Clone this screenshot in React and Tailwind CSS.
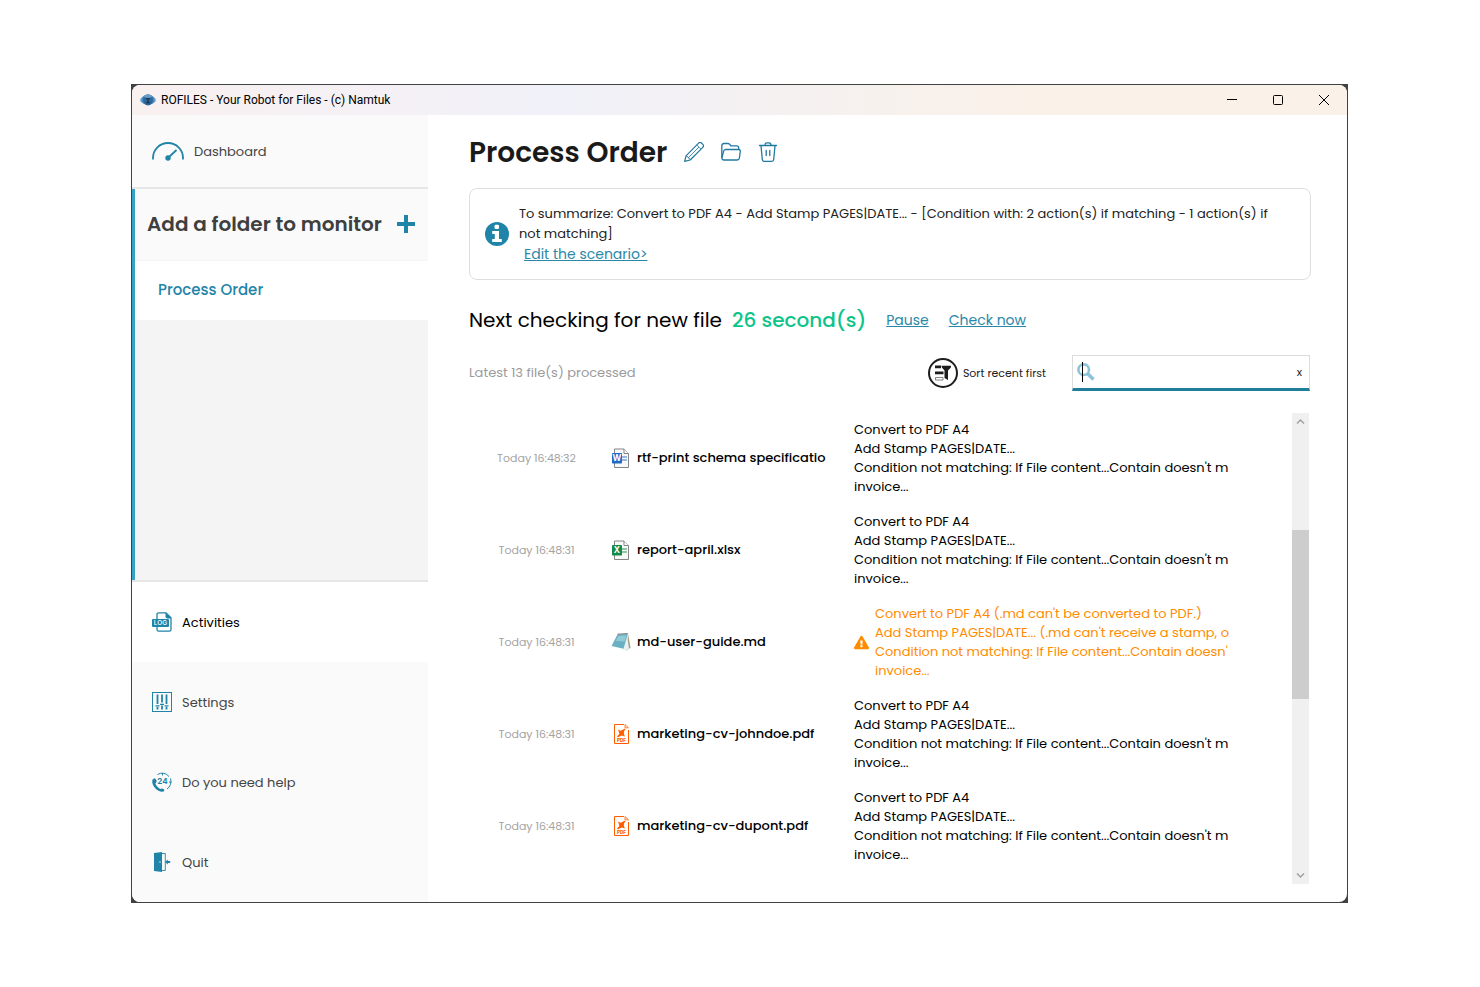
import { FaExclamationTriangle } from "react-icons/fa";
import clsx from "clsx";

const files = [
  { id: 1, time: "Today 16:48:32", type: "word", name: "rtf-print schema specificatio" },
  { id: 2, time: "Today 16:48:31", type: "excel", name: "report-april.xlsx" },
  { id: 3, time: "Today 16:48:31", type: "note", name: "md-user-guide.md", warning: true },
  { id: 4, time: "Today 16:48:31", type: "pdf", name: "marketing-cv-johndoe.pdf" },
  { id: 5, time: "Today 16:48:31", type: "pdf", name: "marketing-cv-dupont.pdf" },
];

const actions = [
  "Convert to PDF A4",
  "Add Stamp PAGES|DATE...",
  "Condition not matching: If File content...Contain doesn't m",
  "invoice...",
];

const warningActions = [
  "Convert to PDF A4 (.md can't be converted to PDF.)",
  "Add Stamp PAGES|DATE... (.md can't receive a stamp, o",
  "Condition not matching: If File content...Contain doesn'",
  "invoice...",
];

function RobotLogo() {
  return (
    <svg viewBox="0 0 16 12" className="h-3 w-4">
      <ellipse cx="8" cy="6" rx="8" ry="4.4" fill="#7fb4e0" />
      <ellipse cx="8" cy="6" rx="6.8" ry="5" fill="#4d8cc4" />
      <ellipse cx="8" cy="5.8" rx="5" ry="5.6" fill="#2f6698" />
      <ellipse cx="8" cy="2.2" rx="4" ry="1.6" fill="#6c9cc6" />
      <path d="M6 4.300h4v1H8.600v3H10v1H6v-1h1.400v-3H6z" fill="#16304f" />
    </svg>
  );
}

function GaugeIcon() {
  return (
    <svg viewBox="0 0 32 20" className="h-5 w-8" fill="none" stroke="#1f84a8">
      <path d="M1 18.500v-1.500a15 15 0 0 1 30 0v1.500" strokeWidth="1.800" />
      <path d="M16.500 16.500 24.500 9" strokeWidth="1.800" />
      <circle cx="16" cy="17" r="2.700" fill="#1f84a8" stroke="none" />
    </svg>
  );
}

function LogIcon() {
  return (
    <svg viewBox="0 0 20 20" className="h-5 w-5">
      <path
        d="M5 7V2.600Q5 .8 6.800.8H14l5 5v11.600q0 1.800-1.800 1.800H6.800Q5 19.200 5 17.400V15"
        fill="#fff"
        stroke="#1f84a8"
        strokeWidth="1.300"
      />
      <path d="M13.500.5 19.500 6.500h-4q-2 0-2-2z" fill="#1f84a8" />
      <rect x="0" y="7" width="17" height="8" rx="1" fill="#1f84a8" />
      <text x="8.500" y="13.400" textAnchor="middle" fontSize="6.500" fontWeight="500" fill="#fff" fontFamily="Inter, sans-serif">
        LOG
      </text>
    </svg>
  );
}

function SlidersIcon() {
  return (
    <svg viewBox="0 0 20 20" className="h-5 w-5" fill="none" stroke="#1f84a8">
      <rect x=".5" y=".5" width="19" height="19" />
      <path d="M5.500 2.500v9.500M10 2.500v8M14.500 2.500v9.500M5.500 15v2.500M10 13.500v4M14.500 15v2.500" strokeWidth="1.800" />
      <path d="M3.500 13.800h4M8 12.300h4M12.500 13.800h4" strokeWidth="1.200" />
    </svg>
  );
}

function HelpIcon() {
  return (
    <svg viewBox="0 0 20 20" className="h-5 w-5" fill="none" stroke="#1f84a8">
      <path
        d="M2.400 6.500C.5 6.500 0 8.500.3 10.500 1 15 5.500 19.500 10 19.800c2.300 0 3-1.500 1.800-2.600-1.300-1.100-2.400-1-3.300-.2C6 16 4 13.500 3.300 11.300 4.500 10.500 5 9.500 4.300 8 3.900 7.100 3.300 6.500 2.400 6.500z"
        fill="#1f84a8"
        stroke="none"
      />
      <path d="M5.500 2.500A8.800 8.800 0 0 1 17 4.500M18.500 6.500a9 9 0 0 1-3.500 10.500" strokeWidth="1" />
      <path d="M10.500.8v2.700M17 10h2.500" strokeWidth="1" />
      <text x="10.500" y="12" textAnchor="middle" fontSize="8" fontWeight="700" fill="#1f84a8" stroke="none" fontFamily="Inter, sans-serif">
        24
      </text>
    </svg>
  );
}

function DoorIcon() {
  return (
    <svg viewBox="0 0 20 20" className="h-5 w-5">
      <path d="M2 1 10 0v20l-8-1z" fill="#1f84a8" />
      <path d="M10 1.500h3.300V18.500H10" fill="none" stroke="#1f84a8" strokeWidth=".9" />
      <path d="M13 10 15.800 7.500v1.600h2.400v1.800h-2.400v1.600z" fill="#1f84a8" />
      <circle cx="8" cy="10" r=".7" fill="#fff" />
    </svg>
  );
}

function PencilIcon() {
  return (
    <svg viewBox="0 0 20 20" className="h-5 w-5" fill="none" stroke="#2178a0" strokeWidth="1.200" strokeLinejoin="round">
      <path d="M.7 19.300 2 13.800 14.600 1.200a2.200 2.200 0 0 1 3.100 0l1.100 1.100a2.200 2.200 0 0 1 0 3.100L6.200 18z" />
      <path d="m12.800 3 4.200 4.200M15 5 4 16M2 13.800q1.800 0 2 2 2 .2 2.200 2.200" strokeWidth=".8" />
    </svg>
  );
}

function FolderIcon() {
  return (
    <svg viewBox="0 0 20 20" className="h-5 w-5" fill="none" stroke="#2178a0" strokeWidth="1.300" strokeLinejoin="round">
      <path d="M.8 15.500V4Q.8 1.500 3 1.500h4q1.300 0 2 1.200l.8 1.100h5.900q2 0 2 2v1.700" />
      <path d="m1 15.500 1.500-6q.3-2 2.300-2h12.700q2 0 1.800 2l-.9 6.500q-.3 2-2.300 2H3q-2.200 0-2.200-2.500" />
    </svg>
  );
}

function TrashIcon() {
  return (
    <svg viewBox="0 0 20 20" className="h-5 w-5" fill="none" stroke="#2178a0" strokeWidth="1.300" strokeLinecap="round">
      <path d="M1.500 3.500h17M7 3.300q0-2.500 2-2.500h2q2 0 2 2.500" />
      <path d="M3 3.800 4.300 17.500q.2 1.800 2 1.800h7.400q1.800 0 2-1.800L17 3.800" />
      <path d="M8.200 8.500v5M11.800 8.500v5" />
    </svg>
  );
}

function InfoIcon() {
  return (
    <svg viewBox="0 0 24 24" className="h-6 w-6 shrink-0">
      <circle cx="12" cy="12" r="12" fill="#1f84a8" />
      <rect x="9.500" y="2.800" width="4.500" height="4.200" rx="1.200" fill="#fff" />
      <path d="M7.200 9h6.800v8h2.800v3H7.200v-3h2.600v-5H7.200z" fill="#fff" />
    </svg>
  );
}

function SortIcon() {
  return (
    <svg viewBox="0 0 30 30" className="h-[30px] w-[30px]">
      <circle cx="15" cy="15" r="14" fill="#fff" stroke="#1d1d1d" strokeWidth="2" />
      <path d="M7 8.800h6M7 14.800h8.500" stroke="#1d1d1d" strokeWidth="2.800" />
      <path d="M7.500 19.500h7.500v2.500H7.500z" fill="#fff" stroke="#666" strokeWidth=".8" />
      <path d="M13.500 7.800h9.500q.3 1.500-.8 2.500L20 12.500v9.500l-3.500-2v-7.500l-2.200-2.500q-.8-1-.8-2.200z" fill="#1d1d1d" />
    </svg>
  );
}

function SearchIcon() {
  return (
    <svg viewBox="0 0 18 18" className="h-[18px] w-[18px]" fill="none" stroke="#8cc3d6">
      <circle cx="6.700" cy="6.700" r="5.300" strokeWidth="2.600" />
      <path d="m10.500 10.500 6 6" strokeWidth="3.600" />
    </svg>
  );
}

function OfficeIcon({ color, letter }) {
  return (
    <svg viewBox="0 0 20 20" className="h-5 w-5">
      <path d="M3.500 1H13l4.500 4.500v14h-14z" fill="#f8f8f8" stroke="#858585" />
      <path d="M13 1v4.500h4.500" fill="#fff" stroke="#858585" />
      <path d="M11 9h5M11 12h5" stroke={color} strokeWidth="1.600" opacity=".6" />
      <rect x="1" y="5" width="10" height="10.500" rx=".8" fill={color} />
      <text x="6" y="13.300" textAnchor="middle" fontSize="8.500" fontWeight="700" fill="#fff" fontFamily="Inter, sans-serif">
        {letter}
      </text>
    </svg>
  );
}

function NoteIcon() {
  return (
    <svg viewBox="0 0 20 20" className="h-5 w-5">
      <path d="m17 1.800 2.500 14-4.500 3z" fill="#a39b7c" />
      <path d="m16 3 2 13.500-3.500 2.500-3.500-2.500z" fill="#e8f1f4" />
      <path d="M6.500 2.500 16.800 2l-4.300 14.800L.5 14z" fill="#68b0c2" />
      <path d="m7.500 4 8-.5-2 6-8.800-.5z" fill="#a4d5de" opacity=".7" />
      <path d="m6.500 2.200 10.300-.6" stroke="#6f7779" />
    </svg>
  );
}

function PdfIcon() {
  return (
    <svg viewBox="0 0 20 20" className="h-5 w-5">
      <path d="M13 .5H3.500v19h14V6" fill="none" stroke="#ff5e00" />
      <path d="M14 .5v3.300h3.500z" fill="none" stroke="#ff5e00" strokeWidth=".8" />
      <path d="m7 5.500 2.500 1.200 4-1.700-.7 4.200 1 3.300-3-1-4 1.800 1.700-3.300z" fill="#ff5e00" />
      <path d="m6.500 13 7.500-8" stroke="#ff5e00" strokeWidth="1.200" />
      <text x="10.500" y="17.800" textAnchor="middle" fontSize="4.500" fontWeight="800" fill="#ff5e00" fontFamily="Inter, sans-serif">
        PDF
      </text>
    </svg>
  );
}

function FileIcon({ type }) {
  if (type === "word") return <OfficeIcon color="#2368c4" letter="W" />;
  if (type === "excel") return <OfficeIcon color="#168a4b" letter="X" />;
  if (type === "note") return <NoteIcon />;
  return <PdfIcon />;
}

function TitleBar() {
  return (
    <header className="flex h-[30px] items-center bg-linear-to-r from-[#f9f0f0] via-[#f1f1f9] via-35% to-[#faf1e8] to-75% pl-2">
      <RobotLogo />
      <span className="ml-[5px] flex-1 font-['Segoe_UI',Roboto,sans-serif] text-xs text-black">
        ROFILES - Your Robot for Files - (c) Namtuk
      </span>
      <button aria-label="Minimize" className="flex h-full w-[46px] items-center justify-center">
        <svg viewBox="0 0 10 10" className="h-2.5 w-2.5" stroke="#000">
          <path d="M0 4.500h10" />
        </svg>
      </button>
      <button aria-label="Maximize" className="flex h-full w-[46px] items-center justify-center">
        <svg viewBox="0 0 10 10" className="h-2.5 w-2.5" fill="none" stroke="#000">
          <rect x=".5" y=".5" width="9" height="9" rx="1" />
        </svg>
      </button>
      <button aria-label="Close" className="flex h-full w-[46px] items-center justify-center">
        <svg viewBox="0 0 10 10" className="h-2.5 w-2.5" stroke="#000">
          <path d="m0 0 10 10M10 0 0 10" />
        </svg>
      </button>
    </header>
  );
}

function MenuItem({ icon, label, active }) {
  return (
    <button
      className={clsx(
        "flex h-20 w-full items-center gap-2.5 pl-5 text-[13px]",
        active ? "bg-white text-black" : "text-[#444]"
      )}
    >
      {icon}
      <span className="pt-0.5">{label}</span>
    </button>
  );
}

function Sidebar() {
  return (
    <nav className="flex w-[296px] shrink-0 flex-col bg-[#fafafa]">
      <button className="flex h-[72px] items-center gap-2.5 pl-5 text-[13px] text-[#444]">
        <GaugeIcon />
        <span className="pt-0.5">Dashboard</span>
      </button>
      <div className="flex flex-1 flex-col border-y-2 border-[#e6e6e6]">
        <div className="flex flex-1 flex-col border-l-3 border-[#37a2c4] bg-[#f4f4f4]">
          <button className="flex h-[71px] items-center justify-between bg-[#fafafa] pr-[13px] pb-0.5 pl-3 text-xl font-semibold text-[#3f3f3f]">
            Add a folder to monitor
            <svg viewBox="0 0 18 18" className="h-[18px] w-[18px]" stroke="#1f84a8" strokeWidth="4">
              <path d="M9 0v18M0 9h18" />
            </svg>
          </button>
          <button className="h-[60px] border-t border-[#f4f4f4] bg-white pl-[23px] text-left text-[15px] font-medium text-[#1f84a8]">
            Process Order
          </button>
        </div>
      </div>
      <MenuItem icon={<LogIcon />} label="Activities" active />
      <MenuItem icon={<SlidersIcon />} label="Settings" />
      <MenuItem icon={<HelpIcon />} label="Do you need help" />
      <MenuItem icon={<DoorIcon />} label="Quit" />
    </nav>
  );
}

function FileRow({ file }) {
  const lines = file.warning ? warningActions : actions;
  return (
    <tr className="h-[92px]">
      <td className="pb-0.5 text-center text-[11px] text-[#a3a3a3]">{file.time}</td>
      <td className="pb-0.5 pl-[7px]">
        <div className="flex items-center gap-1.5 text-[13px] font-medium whitespace-nowrap text-black">
          <span className="shrink-0">
            <FileIcon type={file.type} />
          </span>
          {file.name}
        </div>
      </td>
      <td className="pb-0.5">
        <div
          className={clsx(
            "flex items-center gap-1.5 text-[13px] leading-[19px] whitespace-nowrap",
            file.warning ? "text-[#ff8c00]" : "text-black"
          )}
        >
          {file.warning && <FaExclamationTriangle className="shrink-0 text-[15px]" />}
          <div>
            {lines.map((line) => (
              <p key={line}>{line}</p>
            ))}
          </div>
        </div>
      </td>
    </tr>
  );
}

export default function App() {
  return (
    <div className="flex min-h-screen bg-white py-[84px] pr-[132px] pl-[131px] font-[Poppins,Inter,sans-serif]">
      <div className="flex flex-1 bg-[#3f4241] p-px">
        <div className="flex flex-1 flex-col overflow-hidden rounded-lg bg-white">
          <TitleBar />
          <div className="flex flex-1">
            <Sidebar />
            <main className="flex min-w-0 flex-1 flex-col pt-4 pr-9 pb-[18px] pl-[41px]">
              <div className="flex h-[42px] items-center gap-[17px]">
                <h1 className="pt-0.5 text-[28px] font-semibold text-[#1a1a1a]">Process Order</h1>
                <button aria-label="Rename">
                  <PencilIcon />
                </button>
                <button aria-label="Open folder">
                  <FolderIcon />
                </button>
                <button aria-label="Delete">
                  <TrashIcon />
                </button>
              </div>

              <section className="mt-[15px] flex h-[92px] items-center gap-2.5 rounded-lg border border-[#dedede] pr-8 pl-[15px]">
                <InfoIcon />
                <div className="text-[13px] leading-5 text-[#222]">
                  <p>
                    To summarize: Convert to PDF A4 - Add Stamp PAGES|DATE... - [Condition with: 2
                    action(s) if matching - 1 action(s) if not matching]
                  </p>
                  <a href="#scenario" className="ml-[5px] block w-fit text-sm leading-5 text-[#2a87a8] underline">
                    Edit the scenario&gt;
                  </a>
                </div>
              </section>

              <div className="mt-5 flex h-10 items-center text-xl">
                <h2 className="text-black">Next checking for new file</h2>
                <span className="ml-2.5 font-medium text-[#0cc48a]">26 second(s)</span>
                <a href="#pause" className="ml-5 text-sm text-[#2a87a8] underline">
                  Pause
                </a>
                <a href="#check" className="ml-5 text-sm text-[#2a87a8] underline">
                  Check now
                </a>
              </div>

              <div className="mt-[15px] flex h-9 items-center pr-px">
                <p className="flex-1 text-[13px] text-[#9b9b9b]">Latest 13 file(s) processed</p>
                <button className="flex items-center gap-[5px] text-[11px] text-[#222]">
                  <SortIcon />
                  Sort recent first
                </button>
                <div className="relative ml-[26px] flex h-9 w-[238px] items-center border border-b-3 border-[#dcdcdc] border-b-[#1f7f98]">
                  <span className="absolute left-1">
                    <SearchIcon />
                  </span>
                  <span className="absolute left-[9px] h-5 w-px bg-black" />
                  <input aria-label="Search files" className="h-full w-full pl-7 text-[13px] outline-none" />
                  <button aria-label="Clear search" className="px-[7px] text-[11px] text-[#222]">
                    x
                  </button>
                </div>
              </div>

              <div className="mt-[22px] flex flex-1 pr-0.5">
                <div className="min-w-0 flex-1">
                  <table className="w-full table-fixed">
                    <colgroup>
                      <col className="w-[135px]" />
                      <col className="w-[250px]" />
                      <col />
                    </colgroup>
                    <tbody>
                      {files.map((file) => (
                        <FileRow key={file.id} file={file} />
                      ))}
                    </tbody>
                  </table>
                </div>
                <div className="flex w-[17px] flex-col items-center bg-[#f0f0f0]">
                  <svg viewBox="0 0 17 17" className="h-[17px]" fill="none" stroke="#a0a0a0" strokeWidth="1.500">
                    <path d="m5 10.500 3.500-3.500 3.500 3.500" />
                  </svg>
                  <div className="mt-[100px] h-[169px] w-full bg-[#cdcdcd]" />
                  <svg viewBox="0 0 17 17" className="mt-auto h-[17px]" fill="none" stroke="#a0a0a0" strokeWidth="1.500">
                    <path d="m5 6.500 3.500 3.500 3.500-3.500" />
                  </svg>
                </div>
              </div>
            </main>
          </div>
        </div>
      </div>
    </div>
  );
}
